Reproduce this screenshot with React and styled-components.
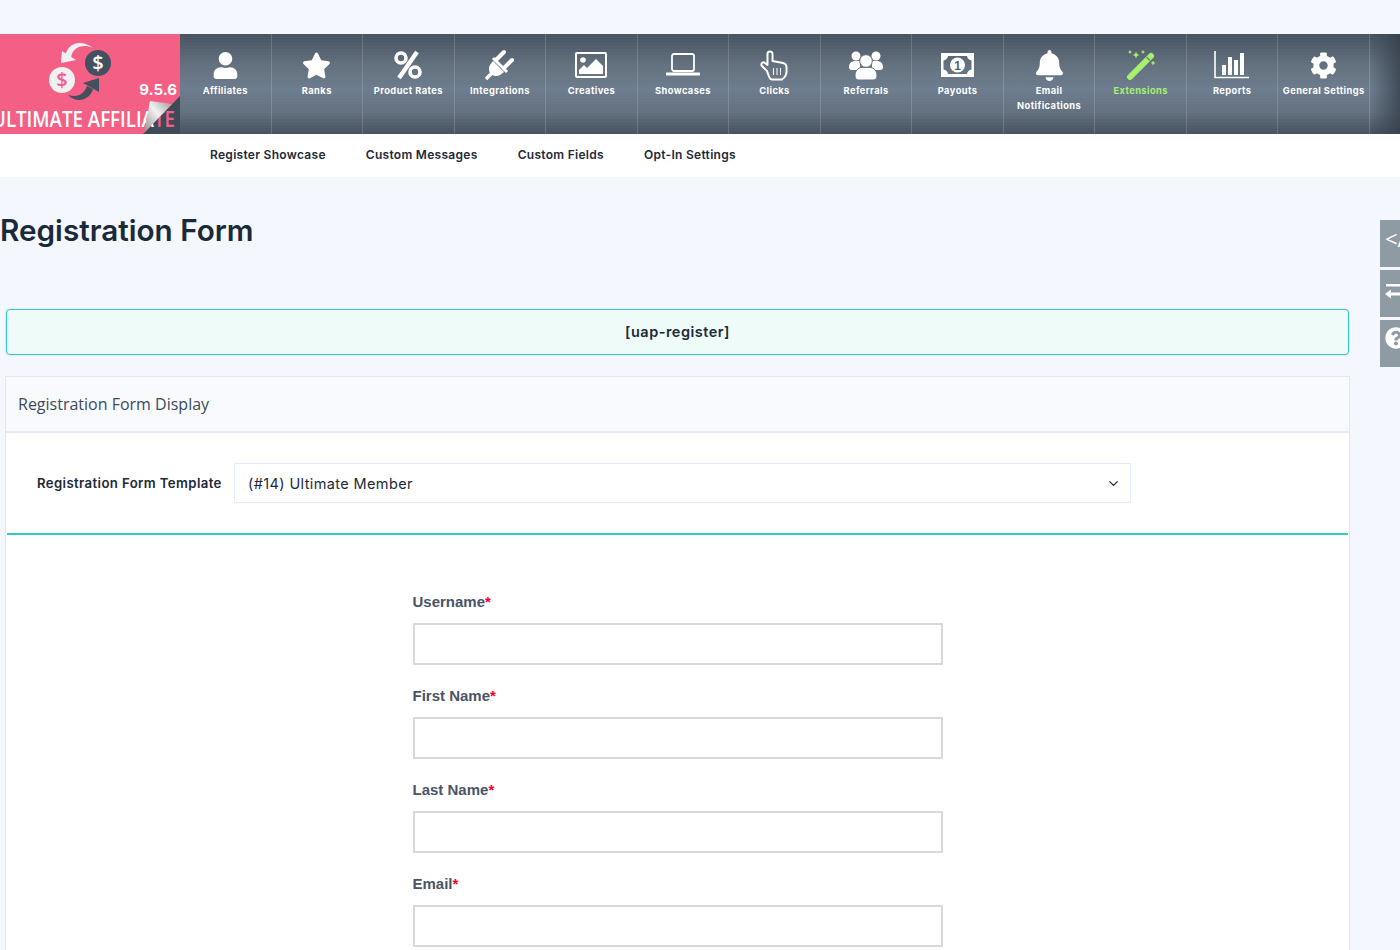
import React from "react";
import styled, { createGlobalStyle } from "styled-components";
import { FaUser, FaStar, FaBell, FaCog, FaQuestionCircle } from "react-icons/fa";
import { FiChevronDown } from "react-icons/fi";

const GlobalStyle = createGlobalStyle`
  html, body {
    margin: 0;
    height: 950px;
    overflow: hidden;
    background: #f4f7fe;
    font-family: "Inter", "Open Sans", sans-serif;
  }
`;

const Page = styled.div`
  position: relative;
  height: 950px;
  overflow: hidden;
  padding-top: 34px;
  box-sizing: border-box;
`;

const TopBar = styled.nav`
  display: grid;
  grid-template-columns: 180px repeat(13, 1fr) 30px;
  height: 100px;
  background:
    repeating-linear-gradient(0deg, rgba(255, 255, 255, 0.01) 0 1px, transparent 1px 3px),
    linear-gradient(180deg, #485362 0%, #64717f 32%, #6d7c8f 55%, #64717f 78%, #465160 100%);
`;

const LogoBox = styled.div`
  background: #f45f85;
  overflow: hidden;
  height: 100px;
`;

const NavItem = styled.div`
  border-right: 1px solid rgba(255, 255, 255, 0.16);
  display: flex;
  flex-direction: column;
  align-items: center;
  padding-top: 14px;
  box-sizing: border-box;
  color: ${(p) => (p.$active ? "#a5f06f" : "#ffffff")};
`;

const IconSlot = styled.div`
  height: 34px;
  display: flex;
  align-items: center;
  justify-content: center;
  margin-bottom: 1px;
  svg { display: block; }
`;

const NavLabel = styled.span`
  font-size: 9.3px;
  font-weight: 700;
  line-height: 15px;
  letter-spacing: 0.42px;
  text-align: center;
  white-space: nowrap;
`;

const EndFade = styled.div`
  background: linear-gradient(90deg, transparent 0%, rgba(50, 60, 72, 0.75) 100%);
`;

const SubBar = styled.div`
  height: 43px;
  padding: 0 0 2px 210px;
  box-sizing: border-box;
  background: #fff;
  display: flex;
  align-items: center;
  gap: 40px;
`;

const SubLink = styled.a`
  font-size: 12px;
  font-weight: 600;
  letter-spacing: 0.29px;
  color: #1d2939;
`;

const Content = styled.main`
  padding: 0 50px 0 5px;
`;

const Title = styled.h1`
  margin: 35px 0 0 -5px;
  font-size: 29.7px;
  line-height: 36px;
  font-weight: 600;
  color: #1b2a3a;
`;

const ShortcodeBox = styled.div`
  margin: 61px 1px 0;
  height: 46px;
  padding-bottom: 2px;
  box-sizing: border-box;
  border: 1px solid #32cbc8;
  border-radius: 4px;
  background: #eefbf8;
  box-shadow: 0 0 0 1px #e6e8ec;
  display: flex;
  align-items: center;
  justify-content: center;
  font-size: 14.5px;
  font-weight: 600;
  letter-spacing: 0.5px;
  color: #1d2939;
`;

const Panel = styled.section`
  margin-top: 21px;
  background: #fff;
  border: 1px solid #e4e6ea;
  height: 700px;
  box-sizing: border-box;
`;

const PanelHead = styled.div`
  height: 56px;
  box-sizing: border-box;
  background: #f9fafe;
  border-bottom: 2px solid #e2eafb;
  padding: 0 12px;
  display: flex;
  align-items: center;
  font-family: "Open Sans", sans-serif;
  font-size: 16px;
  color: #3c4a5a;
`;

const TemplateRow = styled.div`
  display: flex;
  align-items: center;
  height: 102px;
  box-sizing: border-box;
  padding-left: 30px;
  border-bottom: 2px solid #35c8c8;
  margin: 0 1px;
`;

const TemplateLabel = styled.label`
  width: 197px;
  font-size: 13.2px;
  font-weight: 600;
  letter-spacing: 0.38px;
  color: #1d2939;
  white-space: nowrap;
`;

const SelectBox = styled.div`
  width: 897px;
  height: 40px;
  box-sizing: border-box;
  border: 1px solid #e2eafb;
  background: #fff;
  display: flex;
  align-items: center;
  justify-content: space-between;
  padding: 0 9px 0 13px;
  font-size: 14.5px;
  letter-spacing: 0.38px;
  color: #1d2939;
`;

const FormArea = styled.div`
  width: 530px;
  margin: 58px auto 0;
`;

const Field = styled.div`
  margin-bottom: 22px;
`;

const FieldLabel = styled.label`
  display: block;
  font-family: "Liberation Sans", sans-serif;
  font-size: 15px;
  font-weight: 700;
  line-height: 17px;
  color: #4a5565;
  margin-bottom: 13px;
`;

const Req = styled.span`
  color: #f5002a;
`;

const TextBox = styled.input`
  display: block;
  width: 100%;
  height: 42px;
  box-sizing: border-box;
  border: 2px solid #d9d9d9;
  background: #fff;
`;

const SideTabs = styled.div`
  position: absolute;
  top: 220px;
  left: 1380px;
  display: flex;
  flex-direction: column;
  gap: 3px;
`;

const SideTab = styled.div`
  width: 20px;
  height: 47px;
  overflow: hidden;
  background: #8f9ba3;
  color: #fff;
  display: flex;
  align-items: flex-start;
  padding: ${(p) => p.$top}px 0 0 5px;
  box-sizing: border-box;
  font-family: "Open Sans", sans-serif;
  font-size: 22px;
  line-height: 24px;
  white-space: nowrap;
  svg { flex: none; }
`;

const Logo = () => (
  <svg width="180" height="100" viewBox="0 0 180 100">
    <path d="M93 14C80 4 66 10 65 24L71 24C72 14 82 9 93 14Z" fill="#f1f1f3" />
    <path d="M61 29L62 17L76 26Z" fill="#f1f1f3" />
    <circle cx="62" cy="46" r="13" fill="#f1f1f3" />
    <circle cx="98" cy="29" r="13" fill="#43505f" />
    <text x="62" y="53" textAnchor="middle" fontFamily="Open Sans" fontWeight="600" fontSize="20" fill="#f45f85">$</text>
    <text x="98" y="36" textAnchor="middle" fontFamily="Open Sans" fontWeight="600" fontSize="20" fill="#fff">$</text>
    <path d="M68 61C78 64 84 60 87 52L93 55C90 66 77 70 68 61Z" fill="#43505f" />
    <path d="M99 44L99 58L83 49Z" fill="#43505f" />
    <text x="177" y="61" textAnchor="end" fontFamily="Inter" fontWeight="700" fontSize="15" fill="#fff">9.5.6</text>
    <path d="M180 62V100H143Z" fill="#3f4a58" />
    <text x="-8" y="93" fontFamily="Open Sans" fontWeight="600" fontSize="22" fill="#fff" textLength="183" lengthAdjust="spacingAndGlyphs">
      ULTIMATE AFFILIA<tspan fill="#f45f85">TE</tspan>
    </text>
    <defs>
      <linearGradient id="curl" x1="0" y1="1" x2="1" y2="0">
        <stop offset="0" stopColor="#8c8c8c" />
        <stop offset="0.55" stopColor="#f2f2f2" />
        <stop offset="1" stopColor="#9a9a9a" />
      </linearGradient>
    </defs>
    <path d="M150 67L172 70L144 99Z" fill="url(#curl)" />
  </svg>
);

const Percent = () => (
  <svg width="30" height="30" viewBox="0 0 30 30" fill="none" stroke="#fff">
    <circle cx="8" cy="8" r="5" strokeWidth="3.6" />
    <circle cx="22" cy="22" r="5" strokeWidth="3.6" />
    <path d="M24 2L6 28" strokeWidth="4.4" />
  </svg>
);

const Plug = () => (
  <svg width="32" height="32" viewBox="0 0 32 32" fill="#fff">
    <path d="M2 30L10 22" stroke="#fff" strokeWidth="3.4" />
    <path d="M9 12L20 23L16 26C13 28 9 27 7 25C5 23 4 19 6 16Z" />
    <path d="M12 11L20 3" stroke="#fff" strokeWidth="4" strokeLinecap="round" />
    <path d="M20 19L28 11" stroke="#fff" strokeWidth="4" strokeLinecap="round" />
    <path d="M9 9L23 23" stroke="#fff" strokeWidth="3" />
  </svg>
);

const Picture = () => (
  <svg width="32" height="26" viewBox="0 0 32 26" fill="#fff">
    <rect x="1" y="1" width="30" height="24" rx="1" fill="none" stroke="#fff" strokeWidth="2" />
    <circle cx="8" cy="8" r="2.8" />
    <path d="M4 22V18L9 13L12 16L21 7L28 14V22Z" />
  </svg>
);

const Laptop = () => (
  <svg width="34" height="30" viewBox="0 0 34 30" fill="none" stroke="#fff">
    <rect x="6" y="4" width="22" height="17" rx="2" strokeWidth="1.8" />
    <path d="M1 24H33" strokeWidth="3" strokeLinecap="round" />
  </svg>
);

const Hand = () => (
  <svg width="30" height="31" viewBox="0 0 30 31" fill="none" stroke="#fff">
    <path d="M8 21L3 16C1 14 4 11 6 13L8.500 15V4C8.500 .5 13.500 .5 13.500 4V11L24 13C26.500 13.500 27.500 15 27.500 17V22C27.500 25 25 28 23 29.500H13C11 29.500 10 27 8 21Z" strokeWidth="2" strokeLinejoin="round" />
    <path d="M14.500 18V25M18 18V25M21.500 18V25" strokeWidth="1" />
  </svg>
);

const People = () => (
  <svg width="34" height="32" viewBox="0 0 34 32" fill="#fff">
    <circle cx="7" cy="7" r="4.500" />
    <circle cx="27" cy="7" r="4.500" />
    <path d="M0 18C0 14 3 12 6 12H11V21H3C1 21 0 20 0 18ZM34 18C34 14 31 12 28 12H23V21H31C33 21 34 20 34 18Z" />
    <circle cx="17" cy="12" r="6.300" stroke="#687686" strokeWidth="1" />
    <path d="M6 27C6 22 9 18.500 13 18.500H21C25 18.500 28 22 28 27C28 30 26 31 24 31H10C8 31 6 30 6 27Z" stroke="#687686" strokeWidth="1" />
  </svg>
);

const Bill = () => (
  <svg width="33" height="24" viewBox="0 0 33 24">
    <path fillRule="evenodd" fill="#fff" d="M0 0H33V24H0ZM7 3C6.500 5.500 5 7 2.500 7.500V16.500C5 17 6.500 18.500 7 21H26C26.500 18.500 28 17 30.500 16.500V7.500C28 7 26.500 5.500 26 3Z" />
    <circle cx="16.500" cy="12" r="7.500" fill="#fff" />
    <text x="16.500" y="16.500" textAnchor="middle" fontFamily="Liberation Sans" fontWeight="700" fontSize="12" fill="#55626f">1</text>
  </svg>
);

const Wand = () => (
  <svg width="30" height="30" viewBox="0 0 30 30" fill="#a5f06f">
    <path d="M4 27L25 6" stroke="#a5f06f" strokeWidth="6" strokeLinecap="round" />
    <path d="M20.500 7L24 10.500" stroke="#6d7c8f" strokeWidth="1.200" />
    <path d="M10 1.500L11 4L13.500 5L11 6L10 8.500L9 6L6.500 5L9 4Z" />
    <path d="M27 10.500L27.800 12.200L29.500 13L27.800 13.800L27 15.500L26.200 13.800L24.500 13L26.200 12.200Z" />
    <path d="M4 0L4.700 1.300L6 2L4.700 2.700L4 4L3.300 2.700L2 2L3.300 1.300Z" />
    <path d="M17 0L17.700 1.300L19 2L17.700 2.700L17 4L16.300 2.700L15 2L16.300 1.300Z" />
  </svg>
);

const Chart = () => (
  <svg width="36" height="28" viewBox="0 0 36 28" fill="#fff">
    <path d="M1 0V26.500H35" fill="none" stroke="#fff" strokeWidth="1.600" />
    <rect x="8" y="14" width="4" height="10" />
    <rect x="14" y="6" width="4" height="18" />
    <rect x="20" y="9" width="4" height="15" />
    <rect x="26" y="2" width="4" height="22" />
  </svg>
);

const SwapArrows = () => (
  <svg width="30" height="22" viewBox="0 0 30 22" fill="#fff">
    <rect x="1" y="2" width="29" height="2.500" />
    <path d="M0 12L6 7.500V10.500H30V13.500H6V16.500Z" />
  </svg>
);

const navItems = [
  { label: "Affiliates", icon: <FaUser size={27} /> },
  { label: "Ranks", icon: <FaStar size={29} /> },
  { label: "Product Rates", icon: <Percent /> },
  { label: "Integrations", icon: <Plug /> },
  { label: "Creatives", icon: <Picture /> },
  { label: "Showcases", icon: <Laptop /> },
  { label: "Clicks", icon: <Hand /> },
  { label: "Referrals", icon: <People /> },
  { label: "Payouts", icon: <Bill /> },
  { label: <>Email<br />Notifications</>, icon: <FaBell size={31} /> },
  { label: "Extensions", icon: <Wand />, active: true },
  { label: "Reports", icon: <Chart /> },
  { label: "General Settings", icon: <FaCog size={27} /> },
];

const subLinks = ["Register Showcase", "Custom Messages", "Custom Fields", "Opt-In Settings"];
const fields = ["Username", "First Name", "Last Name", "Email"];

export default function App() {
  return (
    <Page>
      <GlobalStyle />
      <TopBar>
        <LogoBox><Logo /></LogoBox>
        {navItems.map((item, i) => (
          <NavItem key={i} $active={item.active}>
            <IconSlot>{item.icon}</IconSlot>
            <NavLabel>{item.label}</NavLabel>
          </NavItem>
        ))}
        <EndFade />
      </TopBar>
      <SubBar>
        {subLinks.map((s) => <SubLink key={s}>{s}</SubLink>)}
      </SubBar>
      <Content>
        <Title>Registration Form</Title>
        <ShortcodeBox>[uap-register]</ShortcodeBox>
        <Panel>
          <PanelHead>Registration Form Display</PanelHead>
          <TemplateRow>
            <TemplateLabel>Registration Form Template</TemplateLabel>
            <SelectBox>
              (#14) Ultimate Member
              <FiChevronDown size={15} />
            </SelectBox>
          </TemplateRow>
          <FormArea>
            {fields.map((f) => (
              <Field key={f}>
                <FieldLabel>{f}<Req>*</Req></FieldLabel>
                <TextBox />
              </Field>
            ))}
          </FormArea>
        </Panel>
      </Content>
      <SideTabs>
        <SideTab $top={6}>&lt;/</SideTab>
        <SideTab $top={12}><SwapArrows /></SideTab>
        <SideTab $top={7}><FaQuestionCircle size={22} /></SideTab>
      </SideTabs>
    </Page>
  );
}
